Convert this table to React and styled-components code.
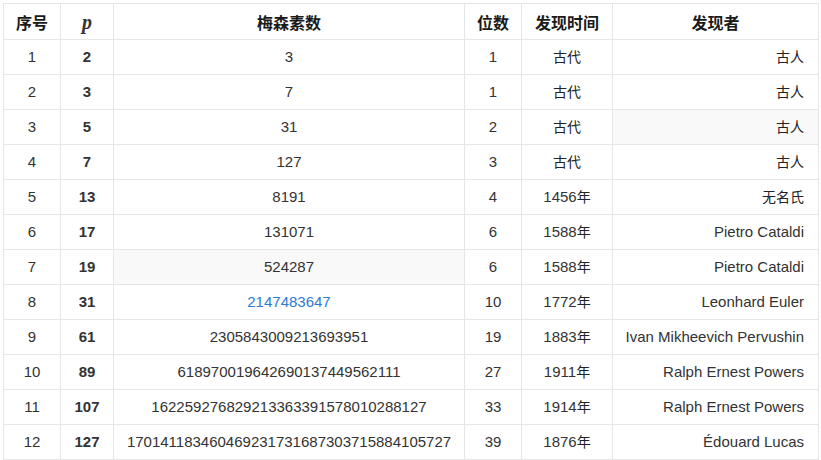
import React from "react";
import styled, { createGlobalStyle } from "styled-components";

const Global = createGlobalStyle`
  html, body { margin: 0; padding: 0; background: #fff; }
  body { font-family: "Liberation Sans", Arial, "Noto Sans CJK SC", sans-serif; }
`;

const Page = styled.div`
  padding: 3px 0 0 3px;
`;

const Table = styled.table`
  border-collapse: collapse;
  table-layout: fixed;
  width: 815px;
  font-size: 15px;
  color: #333;
`;

const HeadCell = styled.th`
  height: 35px;
  padding: 0;
  border: 1px solid #e6e6e6;
  font-family: "Noto Sans CJK SC", sans-serif;
  font-weight: 700;
  font-size: 16px;
  color: #1a1a1a;
  text-align: center;
  vertical-align: middle;
`;

const MathP = styled.span`
  font-family: "Liberation Serif", "DejaVu Serif", serif;
  font-style: italic;
  font-weight: 700;
  font-size: 20px;
  color: #333;
`;

const Cell = styled.td`
  height: 33px;
  padding: ${(p) => (p.$align === "right" ? "0 14px 1px 8px" : "0 8px 1px")};
  border: 1px solid #e6e6e6;
  text-align: ${(p) => p.$align || "center"};
  vertical-align: middle;
  line-height: 20px;
  background: ${(p) => (p.$shade ? "#f9f9f9" : "transparent")};
  font-weight: ${(p) => (p.$bold ? 700 : 400)};
  white-space: nowrap;
`;

const Cjk = styled.span`
  font-family: "Noto Sans CJK SC", sans-serif;
  font-size: 14px;
  font-weight: 400;
  color: #222;
`;

const Link = styled.a`
  color: #2f7bcf;
  text-decoration: none;
`;

const rows = [
  [1, 2, "3", 1, "古代", "古人"],
  [2, 3, "7", 1, "古代", "古人"],
  [3, 5, "31", 2, "古代", "古人"],
  [4, 7, "127", 3, "古代", "古人"],
  [5, 13, "8191", 4, "1456年", "无名氏"],
  [6, 17, "131071", 6, "1588年", "Pietro Cataldi"],
  [7, 19, "524287", 6, "1588年", "Pietro Cataldi"],
  [8, 31, "2147483647", 10, "1772年", "Leonhard Euler"],
  [9, 61, "2305843009213693951", 19, "1883年", "Ivan Mikheevich Pervushin"],
  [10, 89, "618970019642690137449562111", 27, "1911年", "Ralph Ernest Powers"],
  [11, 107, "162259276829213363391578010288127", 33, "1914年", "Ralph Ernest Powers"],
  [12, 127, "170141183460469231731687303715884105727", 39, "1876年", "Édouard Lucas"],
];

function renderYear(s) {
  const m = s.match(/^(\d+)(年)$/);
  if (m) {
    return (
      <>
        {m[1]}
        <Cjk>{m[2]}</Cjk>
      </>
    );
  }
  return <Cjk>{s}</Cjk>;
}

function renderName(s) {
  if (/[\u4e00-\u9fff]/.test(s)) return <Cjk>{s}</Cjk>;
  return s;
}

export default function App() {
  return (
    <Page>
      <Global />
      <Table>
        <colgroup>
          <col style={{ width: 57 }} />
          <col style={{ width: 53 }} />
          <col style={{ width: 351 }} />
          <col style={{ width: 57 }} />
          <col style={{ width: 91 }} />
          <col style={{ width: 206 }} />
        </colgroup>
        <thead>
          <tr>
            <HeadCell>序号</HeadCell>
            <HeadCell>
              <MathP>p</MathP>
            </HeadCell>
            <HeadCell>梅森素数</HeadCell>
            <HeadCell>位数</HeadCell>
            <HeadCell>发现时间</HeadCell>
            <HeadCell>发现者</HeadCell>
          </tr>
        </thead>
        <tbody>
          {rows.map(([n, p, m, d, y, who]) => (
            <tr key={n}>
              <Cell>{n}</Cell>
              <Cell $bold>{p}</Cell>
              <Cell $shade={n === 7}>
                {n === 8 ? <Link href="#">{m}</Link> : m}
              </Cell>
              <Cell>{d}</Cell>
              <Cell>{renderYear(y)}</Cell>
              <Cell $align="right" $shade={n === 3}>
                {renderName(who)}
              </Cell>
            </tr>
          ))}
        </tbody>
      </Table>
    </Page>
  );
}
